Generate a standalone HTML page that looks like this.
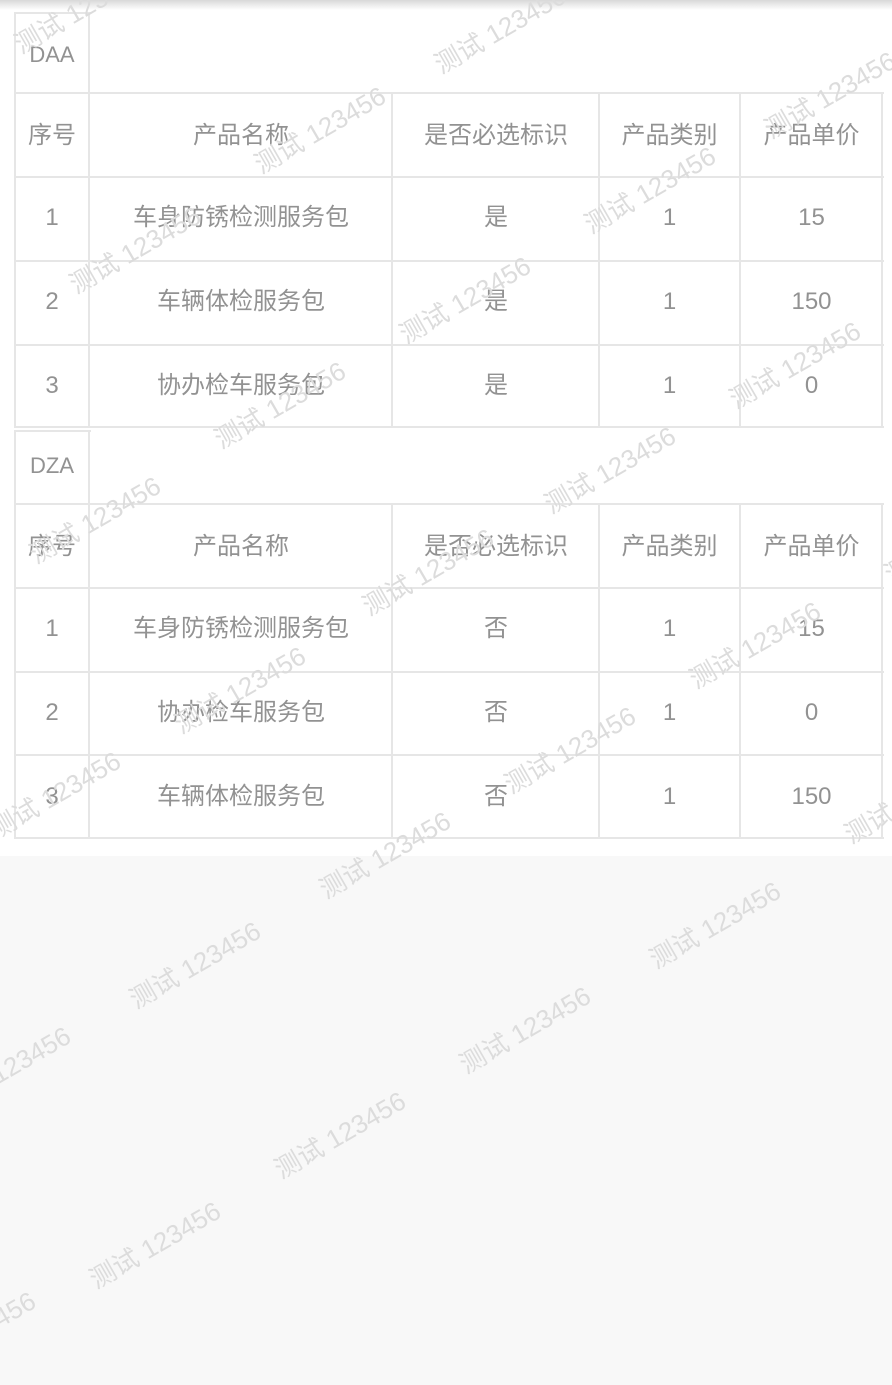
<!DOCTYPE html>
<html><head><meta charset="utf-8"><style>
html,body{margin:0;padding:0}
body{width:892px;height:1324px;position:relative;overflow:hidden;background:#f8f8f8;font-family:"Liberation Sans","Noto Sans CJK SC",sans-serif}
.white{position:absolute;left:0;top:0;width:892px;height:856px;background:#fff}
.shadow{position:absolute;left:0;top:0;width:892px;height:10px;background:linear-gradient(#d8d8d8,rgba(255,255,255,0))}
.h{position:absolute;height:2px;background:#e6e6e6}
.v{position:absolute;width:2px;background:#e6e6e6}
.t{position:absolute;color:#929292;font-size:24px;line-height:30px;height:30px;text-align:center;white-space:nowrap}
.wm{position:absolute;color:#dcdcdc;font-size:26px;white-space:nowrap;transform:translate(-50%,-50%) rotate(-30deg);line-height:30px}
</style></head><body>
<div class="white"></div>
<div class="shadow"></div>

<div class="h" style="left:14px;top:12px;width:77px"></div>
<div class="h" style="left:14px;top:92px;width:870px"></div>
<div class="h" style="left:14px;top:176px;width:870px"></div>
<div class="h" style="left:14px;top:260px;width:870px"></div>
<div class="h" style="left:14px;top:344px;width:870px"></div>
<div class="h" style="left:14px;top:426px;width:870px"></div>
<div class="v" style="left:14px;top:12px;height:416px"></div>
<div class="v" style="left:88px;top:12px;height:416px"></div>
<div class="v" style="left:391px;top:92px;height:336px"></div>
<div class="v" style="left:598px;top:92px;height:336px"></div>
<div class="v" style="left:739px;top:92px;height:336px"></div>
<div class="v" style="left:881px;top:92px;height:336px"></div>

<div class="h" style="left:14px;top:430px;width:77px"></div>
<div class="h" style="left:14px;top:503px;width:870px"></div>
<div class="h" style="left:14px;top:587px;width:870px"></div>
<div class="h" style="left:14px;top:671px;width:870px"></div>
<div class="h" style="left:14px;top:754px;width:870px"></div>
<div class="h" style="left:14px;top:837px;width:870px"></div>
<div class="v" style="left:14px;top:430px;height:409px"></div>
<div class="v" style="left:88px;top:430px;height:409px"></div>
<div class="v" style="left:391px;top:503px;height:336px"></div>
<div class="v" style="left:598px;top:503px;height:336px"></div>
<div class="v" style="left:739px;top:503px;height:336px"></div>
<div class="v" style="left:881px;top:503px;height:336px"></div>

<div class="t" style="left:14px;width:76px;top:40px;font-size:22px">DAA</div>
<div class="t" style="left:14px;width:76px;top:121px">序号</div>
<div class="t" style="left:90px;width:302px;top:121px">产品名称</div>
<div class="t" style="left:392px;width:208px;top:121px">是否必选标识</div>
<div class="t" style="left:599px;width:141px;top:121px">产品类别</div>
<div class="t" style="left:740px;width:143px;top:121px">产品单价</div>

<div class="t" style="left:14px;width:76px;top:203px">1</div>
<div class="t" style="left:90px;width:302px;top:203px">车身防锈检测服务包</div>
<div class="t" style="left:392px;width:208px;top:203px">是</div>
<div class="t" style="left:599px;width:141px;top:203px">1</div>
<div class="t" style="left:740px;width:143px;top:203px">15</div>

<div class="t" style="left:14px;width:76px;top:287px">2</div>
<div class="t" style="left:90px;width:302px;top:287px">车辆体检服务包</div>
<div class="t" style="left:392px;width:208px;top:287px">是</div>
<div class="t" style="left:599px;width:141px;top:287px">1</div>
<div class="t" style="left:740px;width:143px;top:287px">150</div>

<div class="t" style="left:14px;width:76px;top:371px">3</div>
<div class="t" style="left:90px;width:302px;top:371px">协办检车服务包</div>
<div class="t" style="left:392px;width:208px;top:371px">是</div>
<div class="t" style="left:599px;width:141px;top:371px">1</div>
<div class="t" style="left:740px;width:143px;top:371px">0</div>

<div class="t" style="left:14px;width:76px;top:451px;font-size:22px">DZA</div>
<div class="t" style="left:14px;width:76px;top:532px">序号</div>
<div class="t" style="left:90px;width:302px;top:532px">产品名称</div>
<div class="t" style="left:392px;width:208px;top:532px">是否必选标识</div>
<div class="t" style="left:599px;width:141px;top:532px">产品类别</div>
<div class="t" style="left:740px;width:143px;top:532px">产品单价</div>

<div class="t" style="left:14px;width:76px;top:614px">1</div>
<div class="t" style="left:90px;width:302px;top:614px">车身防锈检测服务包</div>
<div class="t" style="left:392px;width:208px;top:614px">否</div>
<div class="t" style="left:599px;width:141px;top:614px">1</div>
<div class="t" style="left:740px;width:143px;top:614px">15</div>

<div class="t" style="left:14px;width:76px;top:698px">2</div>
<div class="t" style="left:90px;width:302px;top:698px">协办检车服务包</div>
<div class="t" style="left:392px;width:208px;top:698px">否</div>
<div class="t" style="left:599px;width:141px;top:698px">1</div>
<div class="t" style="left:740px;width:143px;top:698px">0</div>

<div class="t" style="left:14px;width:76px;top:782px">3</div>
<div class="t" style="left:90px;width:302px;top:782px">车辆体检服务包</div>
<div class="t" style="left:392px;width:208px;top:782px">否</div>
<div class="t" style="left:599px;width:141px;top:782px">1</div>
<div class="t" style="left:740px;width:143px;top:782px">150</div>

<div class="wm" style="left:500px;top:30px">测试 123456</div>
<div class="wm" style="left:80px;top:10px">测试 123456</div>
<div class="wm" style="left:320px;top:130px">测试 123456</div>
<div class="wm" style="left:830px;top:95px">测试 123456</div>
<div class="wm" style="left:650px;top:190px">测试 123456</div>
<div class="wm" style="left:135px;top:250px">测试 123456</div>
<div class="wm" style="left:465px;top:300px">测试 123456</div>
<div class="wm" style="left:795px;top:365px">测试 123456</div>
<div class="wm" style="left:280px;top:405px">测试 123456</div>
<div class="wm" style="left:610px;top:470px">测试 123456</div>
<div class="wm" style="left:95px;top:520px">测试 123456</div>
<div class="wm" style="left:428px;top:572px">测试 123456</div>
<div class="wm" style="left:950px;top:540px">测试 123456</div>
<div class="wm" style="left:755px;top:645px">测试 123456</div>
<div class="wm" style="left:240px;top:690px">测试 123456</div>
<div class="wm" style="left:570px;top:750px">测试 123456</div>
<div class="wm" style="left:55px;top:795px">测试 123456</div>
<div class="wm" style="left:385px;top:855px">测试 123456</div>
<div class="wm" style="left:910px;top:800px">测试 123456</div>
<div class="wm" style="left:715px;top:925px">测试 123456</div>
<div class="wm" style="left:195px;top:965px">测试 123456</div>
<div class="wm" style="left:525px;top:1030px">测试 123456</div>
<div class="wm" style="left:5px;top:1070px">测试 123456</div>
<div class="wm" style="left:340px;top:1135px">测试 123456</div>
<div class="wm" style="left:155px;top:1245px">测试 123456</div>
<div class="wm" style="left:-30px;top:1335px">测试 123456</div>
</body></html>
